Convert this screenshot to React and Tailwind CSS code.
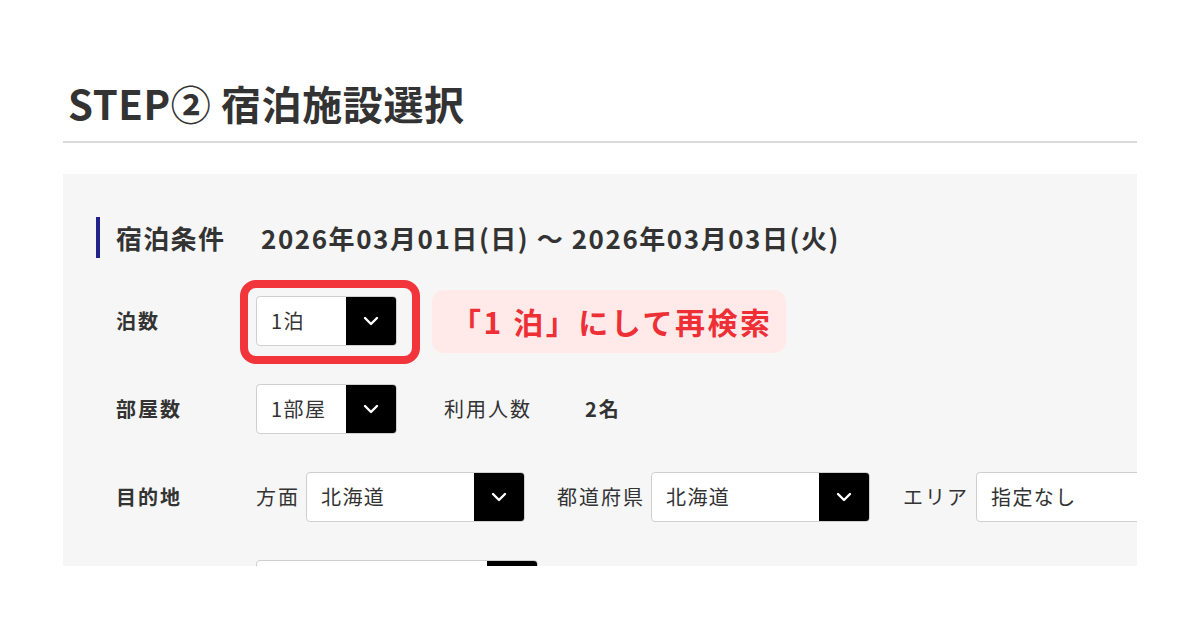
import React from "react";

const font = { fontFamily: '"Noto Sans CJK JP", "Noto Sans", sans-serif' };

function Chevron() {
  return (
    <svg width="16" height="10" viewBox="0 0 16 10" fill="none">
      <path d="M2 2 L8 8 L14 2" stroke="white" strokeWidth="2.4" strokeLinecap="round" strokeLinejoin="round" />
    </svg>
  );
}

function Select({ value, width }) {
  return (
    <div className={`flex h-[50px] ${width} shrink-0 rounded-[4px] border border-[#cfcfcf] bg-white overflow-hidden`}>
      <div className="flex flex-1 items-center whitespace-nowrap pl-[14px] text-[20px] tracking-[0.07em] text-[#333]">{value}</div>
      <div className="flex w-[50px] shrink-0 items-center justify-center bg-black">
        <Chevron />
      </div>
    </div>
  );
}

export default function App() {
  return (
    <div style={font} className="h-[630px] w-[1200px] overflow-hidden bg-white text-[#333]">
      <div className="ml-[63px] w-[1074px] overflow-hidden">
        <h1 className="whitespace-nowrap pl-[5px] pt-[83px] text-[40px] font-bold leading-none tracking-[0.015em] text-[#333]">
          STEP② 宿泊施設選択
        </h1>
        <div className="mt-[18px] h-[2px] bg-[#dadada]" />
        <div className="mt-[31px] h-[392px] overflow-hidden bg-[#f6f6f6] pl-[33px] pt-[43px]">
          <div className="flex h-[41px] items-center border-l-[4px] border-[#22228c] pl-[16px]">
            <div className="w-[145px] shrink-0 text-[26px] font-bold tracking-[0.05em]">宿泊条件</div>
            <div className="whitespace-nowrap text-[26px] font-bold tracking-[0.06em]">2026年03月01日(日) ～ 2026年03月03日(火)</div>
          </div>

          <div className="mt-[38px] flex flex-col gap-[38px] pl-[20px]">
            <div className="flex h-[50px] items-center">
              <div className="w-[140px] shrink-0 text-[20px] font-bold tracking-[0.1em]">泊数</div>
              <div className="relative">
                <Select value="1泊" width="w-[141px]" />
                <div className="pointer-events-none absolute -left-[16px] -right-[23px] -top-[16px] -bottom-[18px] rounded-[16px] border-[8px] border-[#f2343b]" />
              </div>
              <div className="ml-[35px] flex h-[63px] shrink-0 items-center whitespace-nowrap rounded-[12px] bg-[#ffe9e9] pl-[19px] pr-[13px] text-[30px] font-bold tracking-[0.085em] text-[#ee2f36]">
                「1 泊」にして再検索
              </div>
            </div>

            <div className="flex h-[50px] items-center">
              <div className="w-[140px] shrink-0 text-[20px] font-bold tracking-[0.1em]">部屋数</div>
              <Select value="1部屋" width="w-[141px]" />
              <div className="ml-[47px] w-[141px] shrink-0 text-[20px] tracking-[0.1em]">利用人数</div>
              <div className="text-[20px] font-bold tracking-[0.1em]">2名</div>
            </div>

            <div className="flex h-[50px] items-center whitespace-nowrap">
              <div className="w-[140px] shrink-0 text-[20px] font-bold tracking-[0.1em]">目的地</div>
              <div className="shrink-0 text-[20px] tracking-[0.1em]">方面</div>
              <div className="ml-[6px] shrink-0"><Select value="北海道" width="w-[219px]" /></div>
              <div className="ml-[32px] shrink-0 text-[20px] tracking-[0.1em]">都道府県</div>
              <div className="ml-[6px] shrink-0"><Select value="北海道" width="w-[219px]" /></div>
              <div className="ml-[33px] shrink-0 text-[20px] tracking-[0.1em]">エリア</div>
              <div className="ml-[7px] shrink-0"><Select value="指定なし" width="w-[219px]" /></div>
            </div>

            <div className="flex h-[50px] items-center">
              <div className="w-[140px] shrink-0" />
              <Select value="" width="w-[282px]" />
            </div>
          </div>
        </div>
      </div>
    </div>
  );
}
